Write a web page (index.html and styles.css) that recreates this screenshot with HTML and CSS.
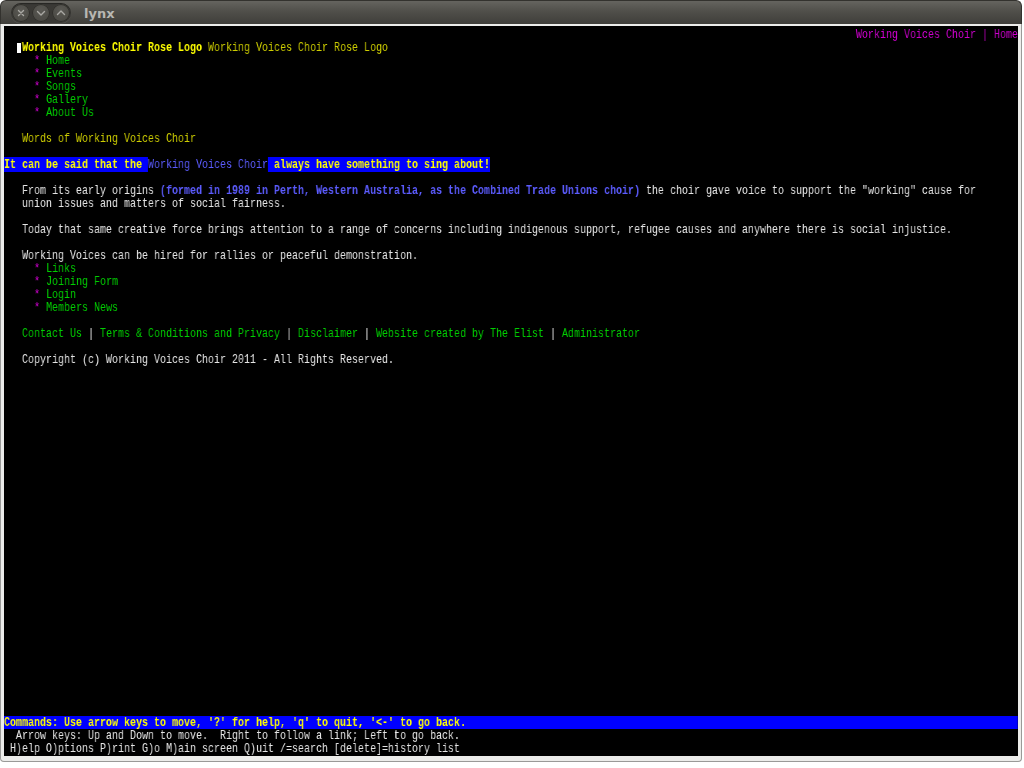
FILE: index.html
```html
<!DOCTYPE html>
<html>
<head>
<meta charset="utf-8">
<title>lynx</title>
<link rel="stylesheet" href="styles.css">
</head>
<body>
<div class="window">
  <div class="titlebar">
    <div class="btns">
      <span class="btn"><svg width="18" height="18" viewBox="0 0 18 18"><path d="M6.5 6.5l5 5M11.5 6.5l-5 5" stroke="#a9a8a3" stroke-width="1.4" fill="none" stroke-linecap="round"/></svg></span>
      <span class="btn"><svg width="18" height="18" viewBox="0 0 18 18"><path d="M5.5 7.5l3.5 3.5 3.5-3.5" stroke="#a9a8a3" stroke-width="1.4" fill="none" stroke-linecap="round" stroke-linejoin="round"/></svg></span>
      <span class="btn"><svg width="18" height="18" viewBox="0 0 18 18"><path d="M5.5 10.5l3.5-3.5 3.5 3.5" stroke="#a9a8a3" stroke-width="1.4" fill="none" stroke-linecap="round" stroke-linejoin="round"/></svg></span>
    </div>
    <span class="title">lynx</span>
  </div>
  <div class="frame">
    <div class="term">
      <div class="screen">
<div class="r right m">Working Voices Choir | Home</div>
<div class="r">  <span class="cur"></span><span class="y">Working Voices Choir Rose Logo</span> <span class="yn">Working Voices Choir Rose Logo</span></div>
<div class="r">     <span class="m">*</span> <span class="g">Home</span></div>
<div class="r">     <span class="m">*</span> <span class="g">Events</span></div>
<div class="r">     <span class="m">*</span> <span class="g">Songs</span></div>
<div class="r">     <span class="m">*</span> <span class="g">Gallery</span></div>
<div class="r">     <span class="m">*</span> <span class="g">About Us</span></div>
<div class="r"></div>
<div class="r">   <span class="yn">Words of Working Voices Choir</span></div>
<div class="r"></div>
<div class="r"><span class="hl">It can be said that the </span><span class="bn">Working Voices Choir</span><span class="hl"> always have something to sing about!</span></div>
<div class="r"></div>
<div class="r w">   From its early origins <span class="b">(formed in 1989 in Perth, Western Australia, as the Combined Trade Unions choir)</span> the choir gave voice to support the "working" cause for</div>
<div class="r w">   union issues and matters of social fairness.</div>
<div class="r"></div>
<div class="r w">   Today that same creative force brings attention to a range of concerns including indigenous support, refugee causes and anywhere there is social injustice.</div>
<div class="r"></div>
<div class="r w">   Working Voices can be hired for rallies or peaceful demonstration.</div>
<div class="r">     <span class="m">*</span> <span class="g">Links</span></div>
<div class="r">     <span class="m">*</span> <span class="g">Joining Form</span></div>
<div class="r">     <span class="m">*</span> <span class="g">Login</span></div>
<div class="r">     <span class="m">*</span> <span class="g">Members News</span></div>
<div class="r"></div>
<div class="r w">   <span class="g">Contact Us</span> | <span class="g">Terms &amp; Conditions and Privacy</span> | <span class="g">Disclaimer</span> | <span class="g">Website created by The Elist</span> | <span class="g">Administrator</span></div>
<div class="r"></div>
<div class="r w">   Copyright (c) Working Voices Choir 2011 - All Rights Reserved.</div>
<div class="spacer"></div>
<div class="r bar">Commands: Use arrow keys to move, '?' for help, 'q' to quit, '&lt;-' to go back.</div>
<div class="r w">  Arrow keys: Up and Down to move.  Right to follow a link; Left to go back.</div>
<div class="r w"> H)elp O)ptions P)rint G)o M)ain screen Q)uit /=search [delete]=history list</div>
      </div>
    </div>
  </div>
</div>
</body>
</html>
```

FILE: styles.css
```css
html, body {
  margin: 0;
  padding: 0;
  background: #ffffff;
}

.window {
  width: 1022px;
  height: 762px;
  display: flex;
  flex-direction: column;
}

.titlebar {
  height: 24px;
  flex: none;
  box-sizing: border-box;
  border-radius: 6px 6px 0 0;
  background: linear-gradient(#65645f, #504f4a 45%, #3f3e3a);
  border: 1px solid #33322e;
  border-bottom: none;
  display: flex;
  align-items: center;
  padding-left: 10px;
}

.btns {
  display: flex;
  gap: 2px;
  padding: 1px;
  border-radius: 11px;
  background: #3a3935;
  box-shadow: inset 0 1px 1px rgba(0,0,0,0.35), 0 1px 0 rgba(255,255,255,0.08);
}

.btn {
  width: 18px;
  height: 18px;
  border-radius: 50%;
  background: radial-gradient(circle at 50% 35%, #5a5954, #46453f);
  box-shadow: inset 0 0 0 1px #302f2b;
  display: flex;
}

.title {
  margin-left: 13px;
  font-family: "DejaVu Sans", sans-serif;
  font-weight: bold;
  font-size: 13px;
  color: #b8b7b2;
  margin-top: 1px;
}

.frame {
  flex: 1;
  background: #ececea;
  border: 1px solid #9a9a98;
  border-top: none;
  border-radius: 0 0 4px 4px;
  padding: 2px 3px 5px 3px;
}

.term {
  width: 1014px;
  height: 730px;
  background: #000;
  overflow: hidden;
}

.screen {
  width: 169ch;
  padding-top: 2px;
  font-family: "Liberation Mono", monospace;
  font-size: 13px;
  line-height: 13px;
  color: #e5e5e5;
  transform: scaleX(0.7691);
  transform-origin: 0 0;
  will-change: transform;
}

.r {
  height: 13px;
  white-space: pre;
}

.spacer {
  height: 350px;
}

.right { text-align: right; }

.m { color: #cd00cd; }
.g { color: #00cd00; }
.w { color: #e5e5e5; }
.y { color: #ffff00; font-weight: bold; }
.yn { color: #cdcd00; }
.b { color: #5c5cff; font-weight: bold; }
.bn { color: #5c5cff; }
.hl { background: #0000ff; color: #ffff00; font-weight: bold; }

.bar {
  background: #0000ff;
  color: #ffff00;
  font-weight: bold;
}

.cur {
  display: inline-block;
  width: 1ch;
  height: 13px;
  vertical-align: top;
  background: linear-gradient(90deg, transparent 17%, #ffffff 17%, #ffffff 80%, transparent 80%) no-repeat;
  background-size: 100% 10px;
  background-position: 0 2px;
}
```
